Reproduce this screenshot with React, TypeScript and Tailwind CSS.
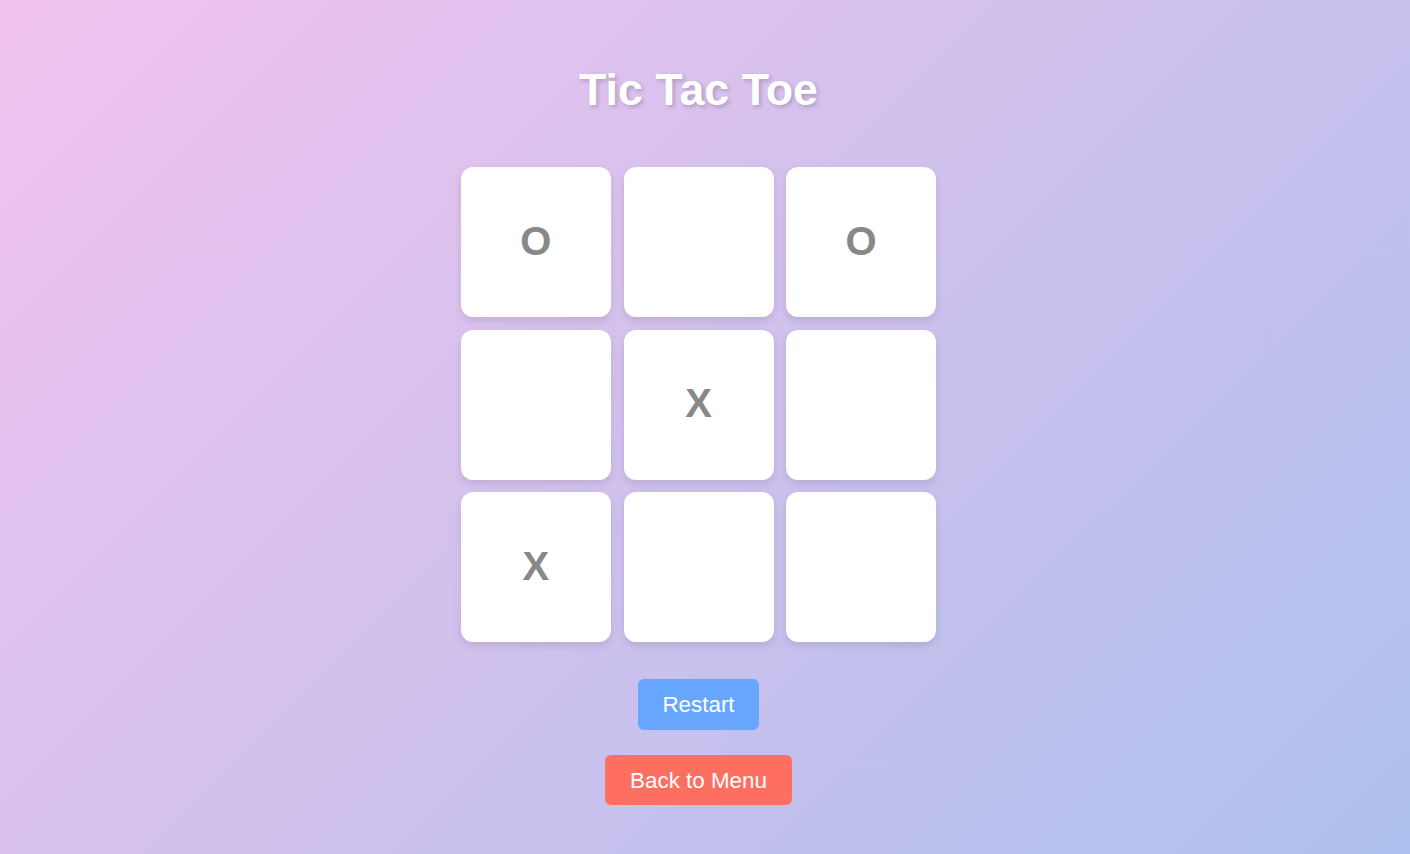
const BOARD = ["O", "", "O", "", "X", "", "X", "", ""];

function Cell({ value }: { value: string }) {
  return (
    <button className="flex h-[150px] w-[150px] items-center justify-center rounded-xl bg-white pb-[3px] text-[40px] font-bold text-[#888888] shadow-[0_4px_8px_rgba(0,0,0,0.1)]">
      {value}
    </button>
  );
}

export default function App() {
  return (
    <main
      className="flex min-h-[854px] w-full flex-col items-center bg-[linear-gradient(135deg,#f2c2ee_0%,#adc0ed_100%)] pr-[13px] pt-[64px]"
      style={{ fontFamily: "'Liberation Sans', Arial, sans-serif" }}
    >
      <h1 className="text-[44.8px] font-bold leading-[50px] text-white [text-shadow:2px_2px_4px_rgba(0,0,0,0.2)]">
        Tic Tac Toe
      </h1>

      {/* Board */}
      <div className="mt-[53px] grid grid-cols-[repeat(3,150px)] gap-[12.6px]">
        {BOARD.map((v, i) => (
          <Cell key={i} value={v} />
        ))}
      </div>

      <button className="mt-[37px] rounded-md bg-[#66a6ff] px-6 py-[12.8px] text-[22.4px] leading-[25px] text-white">
        Restart
      </button>
      <button className="mt-[25px] rounded-md bg-[#ff6f61] px-[25px] py-[12.8px] text-[22.4px] leading-[25px] text-white">
        Back to Menu
      </button>
    </main>
  );
}
